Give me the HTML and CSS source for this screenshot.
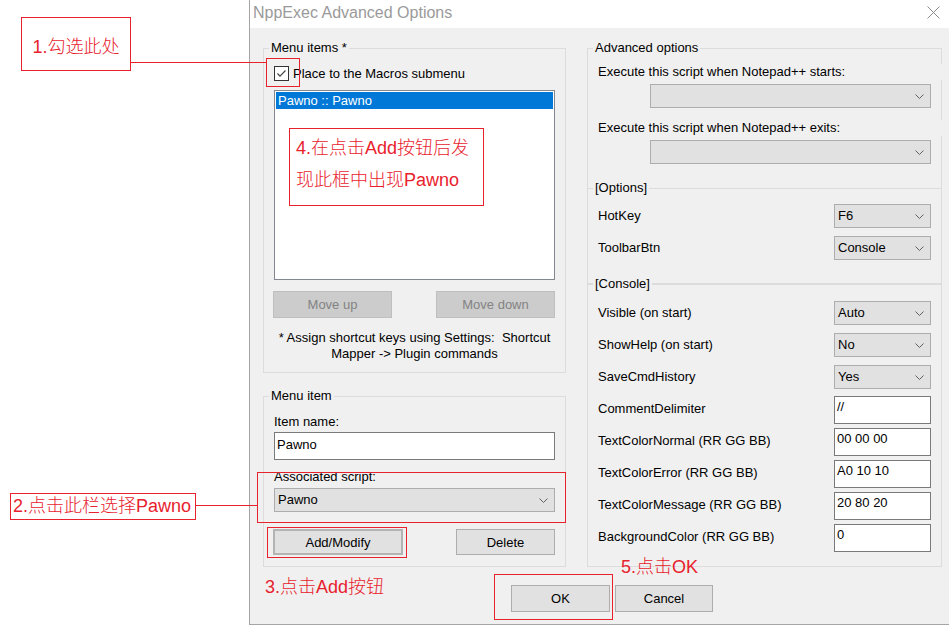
FILE: index.html
```html
<!DOCTYPE html>
<html lang="zh-CN">
<head>
<meta charset="utf-8">
<title>NppExec Advanced Options</title>
<link rel="stylesheet" href="styles.css">
</head>
<body>
<div class="page">
  <div class="gutter"></div>
  <div class="dialog">
    <div class="titlebar">
      <span class="title">NppExec Advanced Options</span>
      <svg class="close" width="13" height="13" viewBox="0 0 13 13"><path d="M0.5 0.5L12.5 12.5M12.5 0.5L0.5 12.5" stroke="#8a8a8a" stroke-width="1" fill="none"/></svg>
    </div>
    <div class="client">
      <div class="cols">
        <div class="left">
          <div class="group g-items">
            <div class="gtitle">Menu items *</div>
            <div class="chk">
              <span class="box"><svg width="13" height="13" viewBox="0 0 13 13"><path d="M2.5 6.5L5 9.2L10.5 3.5" stroke="#444" stroke-width="1.2" fill="none"/></svg></span>
              <span>Place to the Macros submenu</span>
            </div>
            <div class="list"><div class="sel">Pawno :: Pawno</div></div>
            <div class="btnrow r1">
              <button class="btn dis">Move up</button>
              <button class="btn dis">Move down</button>
            </div>
            <p class="note">* Assign shortcut keys using Settings:&nbsp; Shortcut<br>Mapper -&gt; Plugin commands</p>
          </div>
          <div class="group g-item">
            <div class="gtitle">Menu item</div>
            <div class="lbl l1">Item name:</div>
            <div class="edit item-edit">Pawno</div>
            <div class="lbl l2">Associated script:</div>
            <div class="combo item-combo"><span>Pawno</span><svg width="9" height="5" viewBox="0 0 9 5"><path d="M0.5 0.5L4.5 4.5L8.5 0.5" stroke="#606060" fill="none"/></svg></div>
            <div class="btnrow r2">
              <button class="btn add">Add/Modify</button>
              <button class="btn del">Delete</button>
            </div>
          </div>
        </div>
        <div class="group adv">
          <div class="gtitle">Advanced options</div>
          <div class="exec e1">Execute this script when Notepad++ starts:</div>
          <div class="combo big"><span></span><svg width="9" height="5" viewBox="0 0 9 5"><path d="M0.5 0.5L4.5 4.5L8.5 0.5" stroke="#606060" fill="none"/></svg></div>
          <div class="exec e2">Execute this script when Notepad++ exits:</div>
          <div class="combo big"><span></span><svg width="9" height="5" viewBox="0 0 9 5"><path d="M0.5 0.5L4.5 4.5L8.5 0.5" stroke="#606060" fill="none"/></svg></div>
          <div class="sub opts">
            <div class="gtitle">[Options]</div>
            <div class="rows">
              <div class="row"><span class="txt">HotKey</span><div class="combo sm"><span>F6</span><svg width="9" height="5" viewBox="0 0 9 5"><path d="M0.5 0.5L4.5 4.5L8.5 0.5" stroke="#606060" fill="none"/></svg></div></div>
              <div class="row"><span class="txt">ToolbarBtn</span><div class="combo sm"><span>Console</span><svg width="9" height="5" viewBox="0 0 9 5"><path d="M0.5 0.5L4.5 4.5L8.5 0.5" stroke="#606060" fill="none"/></svg></div></div>
            </div>
          </div>
          <div class="sub cons">
            <div class="gtitle">[Console]</div>
            <div class="rows">
              <div class="row"><span class="txt">Visible (on start)</span><div class="combo sm"><span>Auto</span><svg width="9" height="5" viewBox="0 0 9 5"><path d="M0.5 0.5L4.5 4.5L8.5 0.5" stroke="#606060" fill="none"/></svg></div></div>
              <div class="row"><span class="txt">ShowHelp (on start)</span><div class="combo sm"><span>No</span><svg width="9" height="5" viewBox="0 0 9 5"><path d="M0.5 0.5L4.5 4.5L8.5 0.5" stroke="#606060" fill="none"/></svg></div></div>
              <div class="row"><span class="txt">SaveCmdHistory</span><div class="combo sm"><span>Yes</span><svg width="9" height="5" viewBox="0 0 9 5"><path d="M0.5 0.5L4.5 4.5L8.5 0.5" stroke="#606060" fill="none"/></svg></div></div>
              <div class="row"><span class="txt">CommentDelimiter</span><div class="edit sm">//</div></div>
              <div class="row"><span class="txt">TextColorNormal (RR GG BB)</span><div class="edit sm">00 00 00</div></div>
              <div class="row"><span class="txt">TextColorError (RR GG BB)</span><div class="edit sm">A0 10 10</div></div>
              <div class="row"><span class="txt">TextColorMessage (RR GG BB)</span><div class="edit sm">20 80 20</div></div>
              <div class="row"><span class="txt">BackgroundColor (RR GG BB)</span><div class="edit sm">0</div></div>
            </div>
          </div>
        </div>
      </div>
      <div class="okrow">
        <button class="btn ok">OK</button>
        <button class="btn cancel">Cancel</button>
      </div>
    </div>
  </div>

  <div class="ann note1"><span class="lat">1.</span>勾选此处</div>
  <div class="hline line1"></div>
  <div class="mark mark-chk"></div>

  <div class="ann note4"><span class="lat">4.</span>在点击<span class="lat">Add</span>按钮后发<br>现此框中出现<span class="lat">Pawno</span></div>

  <div class="ann note2"><span class="lat">2.</span>点击此栏选择<span class="lat">Pawno</span></div>
  <div class="hline line2"></div>
  <div class="mark mark-combo"></div>

  <div class="mark mark-add"></div>
  <div class="ann note3"><span class="lat">3.</span>点击<span class="lat">Add</span>按钮</div>

  <div class="mark mark-ok"></div>
  <div class="ann note5"><span class="lat">5.</span>点击<span class="lat">OK</span></div>
</div>
</body>
</html>
```

FILE: styles.css
```css
* { box-sizing: border-box; }
html, body { margin: 0; padding: 0; }
body {
  background: #fff;
  font-family: "Liberation Sans", Arial, sans-serif;
  font-size: 13px;
  color: #000;
}
.page {
  position: relative;
  width: 949px;
  height: 625px;
  overflow: hidden;
  display: flex;
}
.gutter { width: 249px; flex: none; }
.dialog {
  width: 700px;
  height: 625px;
  flex: none;
  border-left: 1px solid #a5a5a5;
  border-bottom: 1px solid #a5a5a5;
  display: flex;
  flex-direction: column;
}
.titlebar {
  height: 28px;
  flex: none;
  background: #fff;
  display: flex;
  justify-content: space-between;
  align-items: flex-start;
}
.title {
  font-size: 16px;
  line-height: 26px;
  color: #9a9a9a;
  padding-left: 3px;
}
.close { margin: 6px 9px 0 0; }
.client {
  flex: 1;
  background: #f0f0f0;
  padding: 20px 0 0 13px;
}
.cols { display: flex; gap: 21px; align-items: flex-start; }
.left { width: 303px; flex: none; display: flex; flex-direction: column; }

.group { border: 1px solid #dcdcdc; }
.gtitle {
  margin: -9px 0 0 5px;
  padding: 0 2px;
  width: fit-content;
  height: 16px;
  line-height: 16px;
  background: #f0f0f0;
  white-space: nowrap;
}

/* Menu items */
.g-items { height: 325px; }
.chk {
  display: flex;
  align-items: center;
  gap: 4px;
  margin: 10px 0 0 10px;
  height: 15px;
  line-height: 15px;
}
.box {
  width: 15px;
  height: 15px;
  border: 1px solid #333;
  background: #fff;
  display: flex;
}
.list {
  margin: 9px 10px 0;
  height: 190px;
  border: 1px solid #828790;
  background: #fff;
  padding: 1px;
}
.sel {
  height: 17px;
  line-height: 17px;
  background: #0078d7;
  color: #fff;
  padding-left: 2px;
}
.btnrow { display: flex; justify-content: space-between; margin: 0 10px 0 9px; }
.r1 { margin-top: 11px; }
.r2 { margin-top: 17px; }
.btn {
  font: 13px "Liberation Sans", Arial, sans-serif;
  color: #000;
  background: #e1e1e1;
  border: 1px solid #adadad;
  padding: 0;
  margin: 0;
  height: 27px;
}
.dis {
  width: 119px;
  background: #cccccc;
  border-color: #bfbfbf;
  color: #838383;
}
.note { margin: 12px 0 0; line-height: 16px; text-align: center; }

/* Menu item */
.g-item { margin-top: 23px; height: 171px; }
.lbl { margin-left: 10px; line-height: 16px; }
.l1 { margin-top: 10px; }
.l2 { margin-top: 9px; }
.edit {
  height: 28px;
  border: 1px solid #7a7a7a;
  background: #fff;
  line-height: 16px;
  white-space: nowrap;
}
.item-edit { margin: 2px 10px 0; padding: 4px 0 0 2px; }
.combo {
  height: 24px;
  border: 1px solid #adadad;
  background: #e1e1e1;
  display: flex;
  align-items: center;
  justify-content: space-between;
  padding: 0 6px 0 3px;
  line-height: 16px;
}
.item-combo { margin: 3px 10px 0; }
.add { width: 130px; height: 26px; border: 2px solid #b3b3b3; }
.del { width: 99px; height: 26px; }

/* Advanced options */
.adv { width: 355px; height: 519px; flex: none; }
.exec {
  margin-right: -1px;
  padding-left: 10px;
  line-height: 16px;
  background: #f0f0f0;
}
.e1 { margin-top: 8px; }
.e2 { margin-top: 12px; }
.big { margin: 4px 0 0 62px; width: 281px; }
.sub { border: 1px solid #dcdcdc; margin: 0 -1px; }
.opts { margin-top: 24px; height: 96px; }
.cons { border-bottom: none; height: 282px; }
.opts .rows { margin-top: 4px; }
.cons .rows { margin-top: 5px; }
.row {
  display: flex;
  justify-content: space-between;
  align-items: flex-start;
  height: 32px;
  padding: 0 10px;
}
.txt { line-height: 32px; white-space: nowrap; }
.combo.sm { width: 97px; margin-top: 4px; }
.edit.sm { width: 97px; margin-top: 3px; padding: 2px 0 0 2px; }

/* Bottom buttons */
.okrow { display: flex; gap: 5px; margin: 18px 0 0 248px; }
.ok { width: 99px; }
.cancel { width: 98px; }

/* Annotations */
.ann {
  position: absolute;
  font-family: "Liberation Sans", "Noto Sans CJK SC", sans-serif;
  font-size: 18px;
  font-weight: 300;
  color: #e8222d;
  white-space: nowrap;
}
.ann .lat { font-weight: 400; }
.hline { position: absolute; height: 1px; background: #e8222d; }
.mark { position: absolute; border: 1px solid #e8222d; }

.note1 {
  left: 21px; top: 17px; width: 110px; height: 54px;
  border: 1px solid #e8222d;
  background: #fff;
  display: flex;
  align-items: center;
  justify-content: center;
  padding-top: 6px;
  line-height: 24px;
}
.line1 { left: 131px; top: 62px; width: 135px; }
.mark-chk { left: 266px; top: 58px; width: 34px; height: 29px; }

.note4 {
  left: 289px; top: 128px; width: 195px; height: 78px;
  border: 1px solid #e8222d;
  background: #fff;
  padding: 3px 0 0 6px;
  line-height: 32px;
}

.note2 {
  left: 10px; top: 493px; width: 186px; height: 27px;
  border: 1px solid #e8222d;
  background: #fff;
  line-height: 24px;
  padding-left: 2px;
}
.line2 { left: 196px; top: 505px; width: 61px; }
.mark-combo { left: 257px; top: 472px; width: 309px; height: 51px; }

.mark-add { left: 267px; top: 527px; width: 140px; height: 31px; }
.note3 { left: 265px; top: 575px; line-height: 24px; }

.mark-ok { left: 494px; top: 574px; width: 119px; height: 46px; }
.note5 { left: 621px; top: 555px; line-height: 24px; }
```
